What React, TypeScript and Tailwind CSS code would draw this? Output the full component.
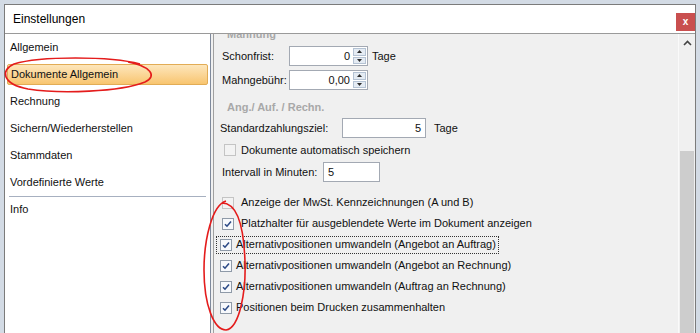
import React from "react";

const Check = ({ checked, disabled }: { checked?: boolean; disabled?: boolean }) => (
  <span
    className={
      disabled
        ? "w-[12px] h-[12px] border border-[#c4c4c4] bg-[#f3f3f3] flex items-center justify-center shrink-0"
        : "w-[12px] h-[12px] border border-[#8f9aa8] bg-[#f7f9fc] flex items-center justify-center shrink-0"
    }
  >
    {checked && (
      <svg width="10" height="10" viewBox="0 0 10 10">
        <path d="M2 5.2 L4 7.2 L8 2.6" stroke="#2c4a86" strokeWidth="1.6" fill="none" />
      </svg>
    )}
  </span>
);

const Spin = () => (
  <div className="flex flex-col w-[15px] h-full gap-[1px] p-[1px] bg-white">
    <div className="flex-1 bg-[#e4ebf3] border border-[#b4c2d3] flex items-center justify-center">
      <svg width="5" height="3" viewBox="0 0 5 3"><path d="M0 3 L2.5 0 L5 3 Z" fill="#2b2b2b" /></svg>
    </div>
    <div className="flex-1 bg-[#e4ebf3] border border-[#b4c2d3] flex items-center justify-center">
      <svg width="5" height="3" viewBox="0 0 5 3"><path d="M0 0 L2.5 3 L5 0 Z" fill="#2b2b2b" /></svg>
    </div>
  </div>
);

const listItems = [
  "Allgemein",
  "Dokumente Allgemein",
  "Rechnung",
  "Sichern/Wiederherstellen",
  "Stammdaten",
  "Vordefinierte Werte",
];

const checkRows = [
  { text: "Anzeige der MwSt. Kennzeichnungen (A und B)", checked: false, focus: false, pad: "pl-[8px]" },
  { text: "Platzhalter für ausgeblendete Werte im Dokument anzeigen", checked: true, focus: false, pad: "pl-[8px]" },
  { text: "Alternativpositionen umwandeln (Angebot an Auftrag)", checked: true, focus: true, pad: "pl-[6px]" },
  { text: "Alternativpositionen umwandeln (Angebot an Rechnung)", checked: true, focus: false, pad: "pl-[6px]" },
  { text: "Alternativpositionen umwandeln (Auftrag an Rechnung)", checked: true, focus: false, pad: "pl-[6px]" },
  { text: "Positionen beim Drucken zusammenhalten", checked: true, focus: false, pad: "pl-[6px]" },
];

export default function App() {
  return (
    <div className="relative w-[700px] h-[333px] overflow-hidden bg-[#d3dbe5] font-['Liberation_Sans',Arial,sans-serif] text-[11px] text-[#111]">
      <div className="ml-[4px] mt-[4px] w-[692px] h-[340px] border border-[#7b7b7b] bg-white flex flex-col">
        {/* Title bar */}
        <div className="h-[29px] flex items-center justify-between pl-[8px] border-b border-[#9a9a9a] shrink-0">
          <span className="text-[12px] text-black">Einstellungen</span>
          <div className="w-[19px] h-[18px] mt-[5px] bg-[#c94f4f] flex items-center justify-center">
            <span className="text-white text-[10px] font-bold leading-none">x</span>
          </div>
        </div>
        {/* Body */}
        <div className="flex flex-1 bg-[#f0f0f0]">
          {/* Left list */}
          <div className="w-[206px] bg-white border-r border-[#7f8a9c] flex flex-col shrink-0">
            {listItems.map((t, i) =>
              i === 1 ? (
                <div key={t} className="h-[27px] flex items-center px-[2px]">
                  <div className="w-full h-[21px] flex items-center pl-[3px] border border-[#e2ac55] bg-gradient-to-b from-[#fde6bb] to-[#f8c56f] rounded-[2px]">
                    {t}
                  </div>
                </div>
              ) : (
                <div key={t} className="h-[27px] flex items-center pl-[5px]">
                  {t}
                </div>
              )
            )}
            <div className="mx-[4px] h-[1px] bg-[#a7b0c0]" />
            <div className="h-[24px] flex items-center pl-[5px]">Info</div>
          </div>
          <div className="w-[2px] bg-[#f0f0f0]" />
          {/* Right panel */}
          <div className="flex-1 flex border-l border-[#a0a0a0] bg-[#f0f0f0] overflow-hidden">
            <div className="flex-1 flex flex-col mt-[-8px] overflow-visible">
              <div className="h-[16px] flex items-center pl-[13px] font-bold text-[#a8a8a8]">Mahnung</div>
              <div className="mt-[4px] h-[20px] flex items-center pl-[8px]">
                <span className="w-[67px]">Schonfrist:</span>
                <div className="w-[79px] h-[20px] border border-[#a3a9b3] bg-white flex">
                  <div className="flex-1 flex items-center justify-end pr-[2px]">0</div>
                  <Spin />
                </div>
                <span className="ml-[4px]">Tage</span>
              </div>
              <div className="mt-[4px] h-[20px] flex items-center pl-[8px]">
                <span className="w-[67px]">Mahngebühr:</span>
                <div className="w-[79px] h-[20px] border border-[#a3a9b3] bg-white flex">
                  <div className="flex-1 flex items-center justify-end pr-[2px]">0,00</div>
                  <Spin />
                </div>
              </div>
              <div className="mt-[8px] h-[18px] flex items-center pl-[13px] font-bold text-[#a8a8a8]">Ang./ Auf. / Rechn.</div>
              <div className="mt-[2px] h-[20px] flex items-center pl-[6px]">
                <span className="w-[122px]">Standardzahlungsziel:</span>
                <div className="w-[84px] h-[20px] border border-[#a3a9b3] bg-white flex items-center justify-end pr-[4px]">5</div>
                <span className="ml-[8px]">Tage</span>
              </div>
              <div className="mt-[2px] h-[20px] flex items-center pl-[10px] gap-[5px]">
                <Check disabled />
                <span>Dokumente automatisch speichern</span>
              </div>
              <div className="mt-[2px] h-[20px] flex items-center pl-[8px]">
                <span className="w-[101px]">Intervall in Minuten:</span>
                <div className="w-[57px] h-[20px] border border-[#a3a9b3] bg-white flex items-center pl-[4px]">5</div>
              </div>
              <div className="mt-[10px] flex flex-col">
                {checkRows.map((r) => (
                  <div key={r.text} className={`h-[21px] flex items-center ${r.pad}`}>
                    {r.focus ? (
                      <div className="flex items-center h-[18px] border border-dotted border-[#333] pl-[3px] pr-[2px] ml-[-4px] gap-[4px]">
                        <Check checked />
                        <span>{r.text}</span>
                      </div>
                    ) : (
                      <div className={r.pad === "pl-[8px]" ? "flex items-center gap-[7px]" : "flex items-center gap-[4px]"}>
                        <Check checked={r.checked} disabled={!r.checked} />
                        <span>{r.text}</span>
                      </div>
                    )}
                  </div>
                ))}
              </div>
            </div>
            {/* Scrollbar */}
            <div className="w-[17px] flex flex-col bg-[#f0f0f0] border-l border-[#fafafa]">
              <div className="h-[117px] flex justify-center pt-[6px]">
                <svg width="9" height="6" viewBox="0 0 9 6">
                  <path d="M1 5 L4.5 1.5 L8 5" stroke="#444" strokeWidth="1.6" fill="none" />
                </svg>
              </div>
              <div className="flex-1 mx-[1px] bg-[#cdcdcd]" />
            </div>
          </div>
        </div>
      </div>
      {/* Red annotation ellipses */}
      <svg className="absolute left-0 top-0 pointer-events-none" width="700" height="333" viewBox="0 0 700 333">
        <path
          d="M140 64 C 110 56, 40 56, 14 64 C 0 70, 2 84, 28 89 C 60 94, 120 92, 145 82 C 158 76, 150 66, 128 62"
          stroke="#e41c1c"
          strokeWidth="1.6"
          fill="none"
        />
        <path
          d="M226 201 C 212 205, 204 240, 204 270 C 204 305, 214 330, 226 330 C 240 328, 246 290, 245 262 C 244 230, 238 203, 222 203"
          stroke="#e41c1c"
          strokeWidth="1.6"
          fill="none"
        />
      </svg>
    </div>
  );
}
